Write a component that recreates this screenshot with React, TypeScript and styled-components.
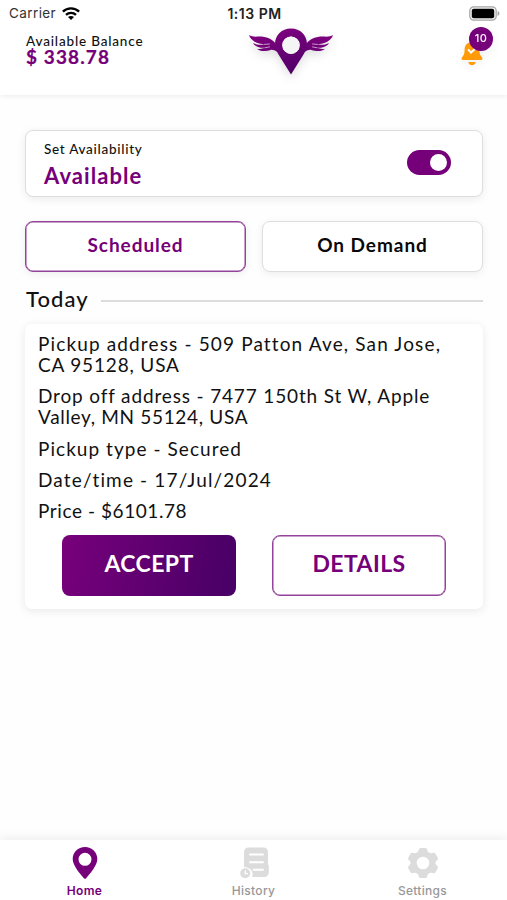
import React from "react";
import styled, { createGlobalStyle } from "styled-components";

const PURPLE = "#75007a";
const BRAND_FONT = 'Lato, "Open Sans", sans-serif';
const SYSTEM_FONT = 'Inter, Roboto, sans-serif';

const GlobalStyle = createGlobalStyle`
  *, *::before, *::after { box-sizing: border-box; }
  body { margin: 0; background: #fff; }
  button { font: inherit; margin: 0; padding: 0; }
`;

const Screen = styled.div`
  width: 507px;
  height: 900px;
  display: flex;
  flex-direction: column;
  overflow: hidden;
  background: #fefefe;
  color: #111;
  font-family: ${BRAND_FONT};
`;

const Header = styled.header`
  height: 95px;
  flex: none;
  background: #fff;
  box-shadow: 0 1px 5px rgba(0, 0, 0, 0.08);
`;

const StatusBar = styled.div`
  height: 27px;
  display: grid;
  grid-template-columns: 1fr auto 1fr;
  align-items: center;
  padding: 0 7px 0 9px;
  font-family: ${SYSTEM_FONT};
  font-size: 13.5px;
  line-height: 27px;
`;

const Carrier = styled.div`
  display: flex;
  align-items: center;
  gap: 6px;
  color: #333;
  letter-spacing: 0.4px;
`;

const Clock = styled.div`
  font-weight: 600;
  font-size: 14px;
  color: #222;
  letter-spacing: 0.5px;
`;

const BatterySlot = styled.div`
  display: flex;
  justify-content: flex-end;
`;

const TopBar = styled.div`
  height: 68px;
  display: grid;
  grid-template-columns: 221px 88px 1fr;
  padding: 0 14px 0 26px;
`;

const Balance = styled.div`
  padding-top: 6px;
`;

const BalanceLabel = styled.div`
  font-size: 13.5px;
  line-height: 16px;
  font-weight: 500;
  letter-spacing: 0.83px;
  white-space: nowrap;
`;

const BalanceValue = styled.div`
  font-size: 19px;
  line-height: 16px;
  font-weight: 700;
  letter-spacing: 1.1px;
  -webkit-text-stroke: 0.2px currentColor;
  color: ${PURPLE};
`;

const LogoSlot = styled.div`
  filter: drop-shadow(0 4px 5px rgba(0, 0, 0, 0.13));
`;

const BellButton = styled.button`
  position: relative;
  justify-self: end;
  width: 32px;
  height: 42px;
  border: 0;
  background: none;
  filter: drop-shadow(0 3px 4px rgba(0, 0, 0, 0.06));
  svg { position: absolute; left: 0; top: 13px; }
`;

const BellBadge = styled.span`
  position: absolute;
  top: 0;
  right: 0;
  width: 24px;
  height: 24px;
  border-radius: 50%;
  background: ${PURPLE};
  color: #fff;
  font: 500 11px/23px ${SYSTEM_FONT};
  letter-spacing: 0.3px;
  text-align: center;
`;

const Main = styled.main`
  flex: 1;
  padding: 35px 24px 0 25px;
`;

const Availability = styled.section`
  height: 67px;
  display: flex;
  align-items: center;
  justify-content: space-between;
  padding: 3px 31px 0 18px;
  background: #fff;
  border: 1px solid #dedede;
  border-radius: 8px;
  box-shadow: 0 2px 9px rgba(0, 0, 0, 0.08);
`;

const AvailabilityLabel = styled.div`
  font-size: 13.5px;
  line-height: 16px;
  font-weight: 500;
  letter-spacing: 0.72px;
`;

const AvailabilityValue = styled.div`
  margin-top: 5px;
  font-size: 22px;
  line-height: 28px;
  font-weight: 700;
  letter-spacing: 1.05px;
  color: ${PURPLE};
`;

const Toggle = styled.button`
  width: 44px;
  height: 25px;
  display: flex;
  justify-content: flex-end;
  align-items: center;
  padding-right: 4px;
  border: 0;
  border-radius: 13px;
  background: ${PURPLE};
  margin-bottom: 5px;
`;

const ToggleKnob = styled.span`
  width: 17px;
  height: 17px;
  border-radius: 50%;
  background: #fff;
`;

const Segments = styled.div`
  display: grid;
  grid-template-columns: 221px 221px;
  justify-content: space-between;
  margin-top: 24px;
`;

const Segment = styled.button<{ $active?: boolean }>`
  height: 51px;
  padding-bottom: 4px;
  background: #fff;
  border: 1px solid ${(p) => (p.$active ? "#94439a" : "#dedede")};
  border-radius: 8px;
  box-shadow: ${(p) => (p.$active ? "inset 0 0 0 0.5px #94439a, " : "")}0 2px 9px rgba(0, 0, 0, 0.07);
  color: ${(p) => (p.$active ? PURPLE : "#080808")};
  font-size: 19px;
  font-weight: 700;
  letter-spacing: 0.95px;
`;

const DayHeading = styled.div`
  height: 52px;
  display: flex;
  align-items: center;
  gap: 12px;
  padding-left: 1px;
`;

const DayLabel = styled.h2`
  margin: 2px 0 0;
  font-size: 22px;
  line-height: 28px;
  font-weight: 500;
  letter-spacing: 1.1px;
`;

const DayRule = styled.span`
  flex: 1;
  height: 2px;
  margin-top: 6px;
  background: #dcdcdc;
`;

const JobCard = styled.article`
  height: 285px;
  padding: 9px 13px 0;
  background: #fff;
  border-radius: 7px;
  box-shadow: 0 2px 9px 1px rgba(0, 0, 0, 0.07);
`;

const Detail = styled.p`
  margin: 0 0 10.3px;
`;

const DetailLine = styled.span<{ $spacing: number }>`
  display: block;
  font-size: 19px;
  line-height: 21px;
  letter-spacing: ${(p) => p.$spacing}px;
  white-space: nowrap;
`;

const Actions = styled.div`
  display: grid;
  grid-template-columns: 174px 174px;
  gap: 36px;
  padding: 3.5px 0 0 24px;
`;

const Action = styled.button<{ $primary?: boolean }>`
  height: 61px;
  padding-bottom: 5px;
  border: ${(p) => (p.$primary ? "0" : "1px solid #94439a")};
  border-radius: 8px;
  background: ${(p) => (p.$primary ? "linear-gradient(100deg, #78007b, #470066)" : "#fff")};
  box-shadow: ${(p) => (p.$primary ? "none" : "inset 0 0 0 0.5px #94439a")};
  color: ${(p) => (p.$primary ? "#fff" : PURPLE)};
  font-size: 23px;
  font-weight: 700;
  letter-spacing: 0.4px;
`;

const TabBar = styled.nav`
  height: 60px;
  flex: none;
  display: grid;
  grid-template-columns: repeat(3, 1fr);
  background: #fff;
  box-shadow: 0 -2px 10px rgba(0, 0, 0, 0.07);
`;

const Tab = styled.a<{ $active?: boolean }>`
  display: flex;
  flex-direction: column;
  align-items: center;
  padding-top: 6px;
  color: ${(p) => (p.$active ? PURPLE : "#989898")};
  font: ${(p) => (p.$active ? 600 : 500)} 12px/16px ${SYSTEM_FONT};
  letter-spacing: 0.3px;
  svg { margin-bottom: 3px; }
`;

const WifiIcon = () => (
  <svg width="18" height="13" viewBox="0 0 18 13" fill="none" stroke="#000" strokeWidth="2.4">
    <path d="M.9 4.6C5.4.3 12.6.3 17.1 4.6" />
    <path d="M4 7.8c2.8-2.600 7.200-2.600 10 0" />
    <path d="M6 10.100c1.700-1.500 4.300-1.500 6 0L9 13z" fill="#000" stroke="none" />
  </svg>
);

const BatteryIcon = () => (
  <svg width="31" height="15" viewBox="0 0 31 15">
    <rect x=".8" y=".8" width="26.4" height="13.4" rx="4" fill="#f4f4f4" stroke="#a5a5a5" strokeWidth="1.2" />
    <rect x="2.8" y="2.7" width="22.4" height="9.6" rx="2" fill="#000" />
    <path d="M28.6 5v5c2.4-.8 2.4-4.2 0-5z" fill="#a5a5a5" />
  </svg>
);

const Wing = () => (
  <path d="M2 8C4.500 10 8 9.600 12 9.600C19.500 9.600 25 12 28.500 16.500L30.500 25C27.500 23.300 26 22.500 23.500 22.900C19 24.500 13 24.800 10 21.700C12.800 22.300 15.500 21.900 18 20.800C13 21 8 19.500 6 15.900C9.500 17.800 13.500 18 17.500 17.400C10.500 16.800 3.500 13.800 2 8Z" />
);

const WingedPinLogo = () => (
  <svg width="88" height="50" viewBox="0 0 88 50" fill="url(#logoFill)">
    <defs>
      <linearGradient id="logoFill" gradientUnits="userSpaceOnUse" x1="30" y1="0" x2="48" y2="50">
        <stop stopColor="#80007f" />
        <stop offset="1" stopColor="#4d0068" />
      </linearGradient>
    </defs>
    <Wing />
    <g transform="translate(88 0) scale(-1 1)"><Wing /></g>
    <path d="M17.500 17.400l5 -.4M18 20.800l4.500-.9M70.500 17.400l-5-.4M70 20.800l-4.500-.9" stroke="#fff" strokeWidth="0.6" strokeLinecap="round" />
    <path fillRule="evenodd" d="M44 1.500c-9.300 0-16 6.800-16 15.500 0 4.300 1.500 7.300 3.500 10.500L44 47.500l12.500-20c2-3.200 3.500-6.200 3.500-10.500C60 8.300 53.300 1.500 44 1.500zM44 9.500a8.700 8.700 0 1 1 0 17.400 8.700 8.700 0 0 1 0-17.400z" />
    <circle cx="44" cy="18.200" r="8.700" fill="#f5f5f5" />
  </svg>
);

const BellIcon = () => (
  <svg width="22" height="26" viewBox="0 0 22 26" fill="#ff9b09">
    <path d="M11 .5c-1.400 0-2.300.8-2.500 2C5 3.500 3.600 6.500 3.600 10c0 3.800-1 5.600-2.700 7.500-.8 1.100-.2 2.500 1.200 2.500h17.800c1.400 0 2-1.400 1.200-2.500-1.700-1.900-2.700-3.700-2.700-7.500 0-3.500-1.400-6.500-4.900-7.500-.2-1.200-1.100-2-2.500-2z" />
    <path d="M7.300 22h7.400c-.6 2.200-2 3.300-3.700 3.300S7.900 24.200 7.300 22z" />
    <path d="m7.600 10 2.400 2.600 4.200-3.800" fill="none" stroke="#fff" strokeWidth="2" strokeLinecap="round" />
  </svg>
);

const PinIcon = () => (
  <svg width="26" height="34" viewBox="0 0 26 34">
    <path fill={PURPLE} fillRule="evenodd" d="M13 1C6 1 .7 6.200.7 13c0 6.500 7 14.200 11.200 19.300.6.700 1.600.7 2.200 0C18.300 27.200 25.300 19.500 25.300 13 25.300 6.200 20 1 13 1zm0 5.800a6.500 6.500 0 1 1 0 13 6.500 6.500 0 0 1 0-13z" />
  </svg>
);

const HistoryIcon = () => (
  <svg width="32" height="34" viewBox="0 0 32 34">
    <path fill="#dcdcdc" d="M10.500 1.500h15A4.500 4.500 0 0 1 30 6v13h.8v7.500a4.500 4.500 0 0 1-4.500 4.500H14.300c1.500-5-1.800-9.800-8.300-10V6a4.500 4.500 0 0 1 4.500-4.500z" />
    <path d="M12 8.500h13M12 16.300h13M15.500 23.800h9.500" stroke="#fff" strokeWidth="1.900" strokeLinecap="round" />
    <circle cx="7.200" cy="27.300" r="5" fill="#dcdcdc" />
    <path d="M7.200 24.800v2.800h2.200" fill="none" stroke="#fff" strokeWidth="1.300" strokeLinecap="round" />
  </svg>
);

const GearIcon = () => (
  <svg width="34" height="34" viewBox="-.5 -.5 35 35">
    <path
      fill="#dcdcdc"
      stroke="#dcdcdc"
      strokeWidth="3"
      strokeLinejoin="round"
      fillRule="evenodd"
      d="M14.500 3h5l1.500 3.600 3.500 2 3.900-.6 2.500 4.400-2.500 3v3.200l2.500 3-2.500 4.400-3.900-.6-3.500 2-1.500 3.600h-5l-1.500-3.600-3.500-2-3.900.6-2.500-4.400 2.500-3v-3.200l-2.500-3 2.500-4.400 3.900.6 3.500-2zM17 9a8 8 0 1 0 0 16 8 8 0 0 0 0-16z"
    />
  </svg>
);

type Line = { text: string; spacing: number };

const details: Line[][] = [
  [
    { text: "Pickup address - 509 Patton Ave, San Jose,", spacing: 1.14 },
    { text: "CA 95128, USA", spacing: 0.83 },
  ],
  [
    { text: "Drop off address - 7477 150th St W, Apple", spacing: 0.85 },
    { text: "Valley, MN 55124, USA", spacing: 0.67 },
  ],
  [{ text: "Pickup type - Secured", spacing: 1.05 }],
  [{ text: "Date/time - 17/Jul/2024", spacing: 1.15 }],
  [{ text: "Price - $6101.78", spacing: 0.57 }],
];

export default function App() {
  return (
    <>
      <GlobalStyle />
      <Screen>
        <Header>
          <StatusBar>
            <Carrier>Carrier <WifiIcon /></Carrier>
            <Clock>1:13 PM</Clock>
            <BatterySlot><BatteryIcon /></BatterySlot>
          </StatusBar>
          <TopBar>
            <Balance>
              <BalanceLabel>Available Balance</BalanceLabel>
              <BalanceValue>$ 338.78</BalanceValue>
            </Balance>
            <LogoSlot><WingedPinLogo /></LogoSlot>
            <BellButton aria-label="Notifications">
              <BellIcon />
              <BellBadge>10</BellBadge>
            </BellButton>
          </TopBar>
        </Header>
        <Main>
          <Availability>
            <div>
              <AvailabilityLabel>Set Availability</AvailabilityLabel>
              <AvailabilityValue>Available</AvailabilityValue>
            </div>
            <Toggle role="switch" aria-checked="true" aria-label="Availability"><ToggleKnob /></Toggle>
          </Availability>
          <Segments>
            <Segment $active>Scheduled</Segment>
            <Segment>On Demand</Segment>
          </Segments>
          <DayHeading>
            <DayLabel>Today</DayLabel>
            <DayRule />
          </DayHeading>
          <JobCard>
            {details.map((lines) => (
              <Detail key={lines[0].text}>
                {lines.map((line) => (
                  <DetailLine key={line.text} $spacing={line.spacing}>{line.text}</DetailLine>
                ))}
              </Detail>
            ))}
            <Actions>
              <Action $primary>ACCEPT</Action>
              <Action>DETAILS</Action>
            </Actions>
          </JobCard>
        </Main>
        <TabBar>
          <Tab $active><PinIcon />Home</Tab>
          <Tab><HistoryIcon />History</Tab>
          <Tab><GearIcon />Settings</Tab>
        </TabBar>
      </Screen>
    </>
  );
}
